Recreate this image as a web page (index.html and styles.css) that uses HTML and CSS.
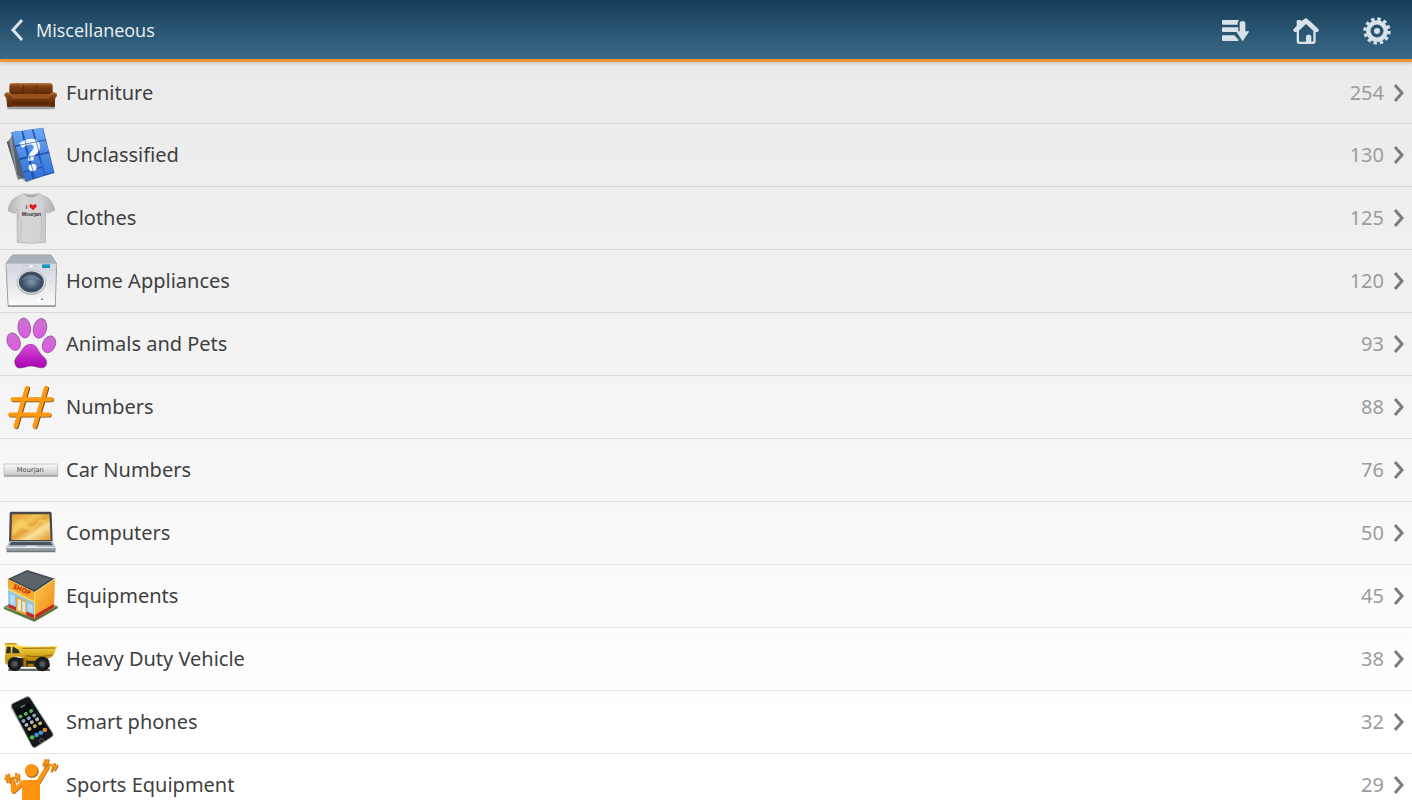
FILE: index.html
```html
<!DOCTYPE html>
<html lang="en">
<head>
    <meta charset="UTF-8">
    <meta name="viewport" content="width=device-width, initial-scale=1.0">
    <title>Miscellaneous</title>
    <link rel="stylesheet" href="styles.css">
</head>
<body>
    <svg class="defs" aria-hidden="true">
        <defs>
            <linearGradient id="leather" x1="0" y1="0" x2="0" y2="1">
                <stop offset="0" stop-color="#a5612b"/>
                <stop offset=".35" stop-color="#7d3e12"/>
                <stop offset="1" stop-color="#5c2805"/>
            </linearGradient>
            <linearGradient id="tile" x1="0" y1="0" x2="0" y2="1">
                <stop offset="0" stop-color="#6ba7f2"/>
                <stop offset="1" stop-color="#2f6fd6"/>
            </linearGradient>
            <linearGradient id="shirt" x1="0" y1="0" x2="1" y2="0">
                <stop offset="0" stop-color="#b5b5b5"/>
                <stop offset=".3" stop-color="#d6d6d6"/>
                <stop offset=".7" stop-color="#d2d2d2"/>
                <stop offset="1" stop-color="#b0b0b0"/>
            </linearGradient>
            <linearGradient id="metal" x1="0" y1="0" x2="0" y2="1">
                <stop offset="0" stop-color="#a9b0b6"/>
                <stop offset=".3" stop-color="#d6dae0"/>
                <stop offset="1" stop-color="#fbfbfb"/>
            </linearGradient>
            <radialGradient id="drum">
                <stop offset="0" stop-color="#8399ab"/>
                <stop offset=".6" stop-color="#4c6178"/>
                <stop offset="1" stop-color="#2a3b4f"/>
            </radialGradient>
            <linearGradient id="toe" x1="0" y1="0" x2="0" y2="1">
                <stop offset="0" stop-color="#c873cd"/>
                <stop offset="1" stop-color="#e05ae4"/>
            </linearGradient>
            <linearGradient id="pad" x1="0" y1="0" x2="0" y2="1">
                <stop offset="0" stop-color="#d64fdc"/>
                <stop offset="1" stop-color="#a900ae"/>
            </linearGradient>
            <linearGradient id="plate" x1="0" y1="0" x2="0" y2="1">
                <stop offset="0" stop-color="#fafafa"/>
                <stop offset="1" stop-color="#c8c8c8"/>
            </linearGradient>
            <linearGradient id="screen" x1="0" y1="0" x2="1" y2="1">
                <stop offset="0" stop-color="#dd9a26"/>
                <stop offset=".35" stop-color="#f3c45a"/>
                <stop offset=".5" stop-color="#e2a136"/>
                <stop offset=".68" stop-color="#fae29a"/>
                <stop offset="1" stop-color="#dd9322"/>
            </linearGradient>
            <linearGradient id="wall" x1="0" y1="0" x2="1" y2="1">
                <stop offset="0" stop-color="#ffc54d"/>
                <stop offset="1" stop-color="#ee8c18"/>
            </linearGradient>
            <linearGradient id="truck" x1="0" y1="0" x2="0" y2="1">
                <stop offset="0" stop-color="#ffdc4a"/>
                <stop offset="1" stop-color="#b98203"/>
            </linearGradient>
            <filter id="soft" x="-20%" y="-20%" width="140%" height="140%">
                <feGaussianBlur stdDeviation="2"/>
            </filter>
        </defs>
    </svg>

    <header class="top-bar">
        <a class="back" href="#">
            <svg class="back-icon" viewBox="0 0 14 24" aria-hidden="true"><path d="M12 2 3 12l9 10"/></svg>
            <span>Miscellaneous</span>
        </a>
        <nav class="tools">
            <a href="#" aria-label="Sort">
                <svg viewBox="0 0 84 84" aria-hidden="true">
                    <path d="M3 12q0-3 3-3h46l2 3-4 3v8H6q-3 0-3-3zM3 34q0-3 3-3h46v14H6q-3 0-3-3zM3 58q0-3 3-3h34l13 14-2 3H6q-3 0-3-3z"/>
                    <path d="M56 18q0-5 5-5h7q5 0 5 5v25h12L65 73 45 43h11z"/>
                </svg>
            </a>
            <a href="#" aria-label="Home">
                <svg viewBox="0 0 84 84" aria-hidden="true">
                    <path fill-rule="evenodd" d="M42 3 56 14 79 36q4 4 0 7l-2 3-6-2v29q0 8-8 8H22q-8 0-8-8V44l-6 2-4-5q-2-2 1-5l9-9V12q0-3 3-3h7q3 0 3 4zM42 21 21 41v30q0 3 3 3h18V59q0-6 6-6h4q6 0 6 6v15q6 0 6-3V41z"/>
                </svg>
            </a>
            <a href="#" aria-label="Settings">
                <svg viewBox="0 0 84 84" aria-hidden="true">
                    <circle class="gear-teeth" cx="42" cy="42" r="36"/>
                    <circle class="gear-ring" cx="42" cy="42" r="26"/>
                    <circle cx="42" cy="42" r="9"/>
                </svg>
            </a>
        </nav>
    </header>

    <main>
        <ul class="sections">
            <li><a class="section" href="#">
                <svg class="pic" viewBox="0 -3 192 186" aria-hidden="true">
                    <path d="M22 131h142v8H22z" fill="#6e6e6e" opacity=".6" filter="url(#soft)"/>
                    <path d="M28 66q1-5 7-5 17-2 34 0 20-2 40 0 20-2 41 0 7 0 8 6v28H28z" fill="url(#leather)"/>
                    <path d="M20 98h145v33H21z" fill="#602b07"/>
                    <path d="M33 94q60-3 120 0v14H33z" fill="#965222"/>
                    <path d="M33 107h120v7H33z" fill="#713308"/>
                    <path d="M13 94q4-8 14-5 8 3 9 12l-3 30H22l-3-27q-7-3-6-10zM171 94q-4-8-14-5-8 3-9 12l3 30h12l3-27q6-3 5-10z" fill="url(#leather)"/>
                    <path d="M14 93q5-6 13-3 6 2 8 8M170 93q-5-6-13-3-6 2-8 8M31 63q20-4 38 0M72 63q19-3 37 0M111 63q23-3 43 0" fill="none" stroke="#bd7b43" stroke-width="3"/>
                    <path d="M70 64v28M110 64v28M22 121h140" stroke="#57290b" stroke-width="2"/>
                </svg>
                <span class="name">Furniture</span>
                <span class="count">254</span>
                <svg class="arrow" viewBox="0 0 12 20" aria-hidden="true"><path d="m2 2 7 8-7 8"/></svg>
            </a></li>
            <li><a class="section" href="#">
                <svg class="pic" viewBox="0 -3 192 186" aria-hidden="true">
                    <path d="m20 50 25-9 30 115-20 8z" fill="#53575e"/>
                    <path d="m26 46 22-30 32 140-28 6z" fill="#868c94"/>
                    <path d="m34 24 96-16 33 134-84 30-27-22z" fill="#243851" opacity=".5" filter="url(#soft)"/>
                    <path d="m34 22 94-12 35 134-85 24z" fill="#1c53af"/>
                    <path d="m36 22 28-5 8 37-27 8zM68 17l27-5 10 36-29 6zM99 12l28-4 9 36-28 5zM47 66l26-7 9 35-25 6zM77 58l28-6 10 34-28 7zM109 51l27-6 11 34-28 7zM60 106l24-7 8 34-23 7zM88 98l27-7 9 34-27 7zM119 91l27-7 15 57-32 9zM70 144l22-7 5 25-19 5zM97 136l27-7 5 23-26 8z" fill="url(#tile)"/>
                    <text class="mark" x="63" y="137" transform="rotate(-10 95 90)">?</text>
                    <path d="m68 18 36 140M99 13l36 136M45 63l92-18M58 103l91-21" stroke="#1d4ba5" stroke-width="2"/>
                </svg>
                <span class="name">Unclassified</span>
                <span class="count">130</span>
                <svg class="arrow" viewBox="0 0 12 20" aria-hidden="true"><path d="m2 2 7 8-7 8"/></svg>
            </a></li>
            <li><a class="section" href="#">
                <svg class="pic" viewBox="0 -3 192 186" aria-hidden="true">
                    <path d="M71 17q22 6 46 0l25 12q15 8 23 38l-23 9-5-13-1 100q-43 6-84 0L51 63l-6 14-21-9q5-30 21-38z" fill="url(#shirt)" stroke="#aaa" stroke-width="2"/>
                    <path d="M71 17q22 23 46 0-22 8-46 0z" fill="#aaa"/>
                    <path d="M51 62q6 15 5 31M137 62q-6 15-5 31M66 89q-5 49-3 69M123 87q7 36-1 69" fill="none" stroke="#bebebe" stroke-width="3"/>
                    <text class="shirt-text" x="77" y="64">I</text>
                    <path d="M99 67 89 57q-3-8 4-8 4 0 6 4 2-4 6-4 7 0 4 8z" fill="#df1824"/>
                    <text class="shirt-text" x="65" y="83">Mourjan</text>
                </svg>
                <span class="name">Clothes</span>
                <span class="count">125</span>
                <svg class="arrow" viewBox="0 0 12 20" aria-hidden="true"><path d="m2 2 7 8-7 8"/></svg>
            </a></li>
            <li><a class="section" href="#">
                <svg class="pic" viewBox="0 -3 192 186" aria-hidden="true">
                    <path d="M24 159h143v8H24z" fill="#777" filter="url(#soft)"/>
                    <path d="M35 14q2-2 6-2h108q5 0 7 4l14 23-4 121q0 4-4 4H29q-5 0-5-4L18 38z" fill="url(#metal)" stroke="#98a0a5" stroke-width="3"/>
                    <path d="m36 15-17 23h150l-15-23z" fill="#aab2b7"/>
                    <path d="M19 38h150v15H20z" fill="#d6dae1"/>
                    <path d="M126 40h24v11h-24z" fill="#1695bd"/>
                    <circle cx="93" cy="46" r="7" fill="#f8f8f8" stroke="#9da5ad"/>
                    <path d="M68 45h16M103 45h13" stroke="#c3c7cd" stroke-width="3"/>
                    <ellipse cx="94" cy="94" rx="44" ry="38" fill="#a9b0b9"/>
                    <ellipse cx="94" cy="93" rx="42" ry="35" fill="#d9dde2"/>
                    <ellipse cx="94" cy="93" rx="35" ry="29" fill="url(#drum)" stroke="#47535f" stroke-width="5"/>
                    <path d="M63 91q20-16 62-1-22-29-50-13-10 6-12 14z" fill="#9fafbd" opacity=".35"/>
                    <path d="M109 140h33v16h-33z" fill="#fff" stroke="#d8dadd"/>
                    <path d="M123 143h7v4h-7z" fill="#4e82b2"/>
                </svg>
                <span class="name">Home Appliances</span>
                <span class="count">120</span>
                <svg class="arrow" viewBox="0 0 12 20" aria-hidden="true"><path d="m2 2 7 8-7 8"/></svg>
            </a></li>
            <li><a class="section" href="#">
                <svg class="pic" viewBox="0 -3 192 186" aria-hidden="true">
                    <g fill="url(#toe)" stroke="#8b4790" stroke-width="2">
                        <ellipse cx="73" cy="42" rx="19" ry="30" transform="rotate(-7 73 42)"/>
                        <ellipse cx="120" cy="43" rx="20" ry="30" transform="rotate(13 120 43)"/>
                        <ellipse cx="41" cy="83" rx="19" ry="27" transform="rotate(-22 41 83)"/>
                        <ellipse cx="147" cy="91" rx="19" ry="26" transform="rotate(23 147 91)"/>
                    </g>
                    <path d="M92 91c-18 0-24 15-32 26-10 11-18 18-15 32 3 16 16 14 31 10 14-4 21-4 34 0 17 5 30 3 30-14-1-13-12-17-20-28-8-10-11-26-28-26z" fill="url(#pad)" stroke="#804087" stroke-width="2"/>
                </svg>
                <span class="name">Animals and Pets</span>
                <span class="count">93</span>
                <svg class="arrow" viewBox="0 0 12 20" aria-hidden="true"><path d="m2 2 7 8-7 8"/></svg>
            </a></li>
            <li><a class="section" href="#">
                <svg class="pic" viewBox="0 186 192 186" aria-hidden="true">
                    <g fill="none" stroke-linecap="round">
                        <path d="M84 224 50 339M141 224l-34 115M40 258h116M33 304h116" stroke="#765018" stroke-width="13"/>
                        <path d="M81 222 47 337M138 222l-34 115M38 256h116M31 302h116" stroke="#ff9710" stroke-width="13"/>
                    </g>
                </svg>
                <span class="name">Numbers</span>
                <span class="count">88</span>
                <svg class="arrow" viewBox="0 0 12 20" aria-hidden="true"><path d="m2 2 7 8-7 8"/></svg>
            </a></li>
            <li><a class="section" href="#">
                <svg class="pic" viewBox="0 -3 192 186" aria-hidden="true">
                    <path d="M12 102h162v8H12z" fill="#999"/>
                    <path d="M12 72h161v34H12z" fill="url(#plate)" stroke="#b5b5b5" stroke-width="2"/>
                    <text class="plate-text" x="91" y="97">Mourjan</text>
                </svg>
                <span class="name">Car Numbers</span>
                <span class="count">76</span>
                <svg class="arrow" viewBox="0 0 12 20" aria-hidden="true"><path d="m2 2 7 8-7 8"/></svg>
            </a></li>
            <li><a class="section" href="#">
                <svg class="pic" viewBox="0 187 192 186" aria-hidden="true">
                    <path d="M20 329h146v9H20z" fill="#777" filter="url(#soft)"/>
                    <path d="M29 221q0-5 5-5h116q5 0 5 5l3 88H27z" fill="#47474c"/>
                    <path d="M36 224h112l4 77H34z" fill="url(#screen)"/>
                    <path d="M43 252q17-25 34-1t41-11q15-7 20 9-21-4-33 14t-31 5-31 14z" fill="#fbd66f" opacity=".55" filter="url(#soft)"/>
                    <path d="M29 304h129l9 20H18z" fill="#b7bec5"/>
                    <path d="M34 306h118l6 11H28z" fill="#49545f"/>
                    <path d="M79 318h30l3 5H76z" fill="#e5e9ed"/>
                    <path d="M18 323h149q2 8-6 10H25q-9-1-7-10z" fill="#929ba2"/>
                    <path d="M19 324h147" stroke="#eef1f4" stroke-width="3"/>
                </svg>
                <span class="name">Computers</span>
                <span class="count">50</span>
                <svg class="arrow" viewBox="0 0 12 20" aria-hidden="true"><path d="m2 2 7 8-7 8"/></svg>
            </a></li>
            <li><a class="section" href="#">
                <svg class="pic" viewBox="0 -3 192 186" aria-hidden="true">
                    <path d="m11 122 75-34 87 33-70 44z" fill="#7b9852"/>
                    <path d="m11 123 92 36v8l-91-38zM103 159l70-39v7l-70 40z" fill="#56713a"/>
                    <path d="m24 45 80 40v74l-79-35z" fill="#8fc5e8"/>
                    <path d="m104 79 61-41-3 85-58 33z" fill="url(#wall)"/>
                    <path d="m23 39 58-27 84 26-61 41z" fill="#454b52"/>
                    <path d="m33 38 48-20 71 21-49 32z" fill="#5d656c"/>
                    <path d="m23 39 81 39v28L25 67z" fill="#f4a92c"/>
                    <text class="shop-text" x="38" y="66" transform="rotate(24 38 66)">SHOP</text>
                    <path d="m25 67 79 38v6L25 73z" fill="#ffd55a"/>
                    <path d="m25 114 79 33v12l-79-35zM104 147l57-33v10l-57 35z" fill="#c82620"/>
                    <path d="m48 92 31 14v42l-31-13z" fill="#f2a529"/>
                    <path d="m53 99 10 4v33l-10-4zM67 105l9 4v31l-9-4z" fill="#d5edf5"/>
                    <path d="m31 83 13 6v29l-13-6zM83 111l15 7v22l-15-6z" fill="#bedcf1"/>
                    <path d="m104 79 61-41M104 80v77" stroke="#ffe267" stroke-width="3"/>
                </svg>
                <span class="name">Equipments</span>
                <span class="count">45</span>
                <svg class="arrow" viewBox="0 0 12 20" aria-hidden="true"><path d="m2 2 7 8-7 8"/></svg>
            </a></li>
            <li><a class="section" href="#">
                <svg class="pic" viewBox="0 -3 192 186" aria-hidden="true">
                    <path d="M25 119h125v7H25z" fill="#666" filter="url(#soft)"/>
                    <path d="M21 86h122l7 27H24z" fill="#2b2717"/>
                    <path d="M15 48h40l13 24 32 8 7 15H83q-11-15-40-12-12 3-19 16h-8z" fill="url(#truck)"/>
                    <path d="M21 53h11v20H18zM38 53h14l7 20H37z" fill="#26302c"/>
                    <path d="M14 47h39l-5-5H16zM16 77h5v29h-5z" fill="#d59b0c"/>
                    <path d="M44 48q30 6 64 5l64-1-13 29q-26 17-51 14L80 88 67 69 42 55z" fill="url(#truck)"/>
                    <path d="m67 58 98-1M77 80q36 7 79-2" fill="none" stroke="#8f6a0a" stroke-width="3"/>
                    <g fill="#171b1c">
                        <circle cx="44" cy="105" r="21"/>
                        <circle cx="127" cy="105" r="22"/>
                    </g>
                    <g fill="#555a56" stroke="#363d3d" stroke-width="4">
                        <circle cx="44" cy="105" r="9"/>
                        <circle cx="127" cy="105" r="9"/>
                    </g>
                    <path d="M70 86h9v27h-9zM83 104h18v10H84z" fill="#a77508"/>
                </svg>
                <span class="name">Heavy Duty Vehicle</span>
                <span class="count">38</span>
                <svg class="arrow" viewBox="0 0 12 20" aria-hidden="true"><path d="m2 2 7 8-7 8"/></svg>
            </a></li>
            <li><a class="section" href="#">
                <svg class="pic" viewBox="0 0 192 186" aria-hidden="true">
                    <path d="m30 49 70 122 27-13-70-110z" fill="#888" opacity=".5" filter="url(#soft)"/>
                    <path d="M35 49q-4-8 4-12l39-19q8-4 14 5l66 103q4 8-4 13l-47 30q-7 4-12-5z" fill="#15181a" stroke="#a5a8aa" stroke-width="3"/>
                    <path d="m44 61 41-25 54 76-46 29z" fill="#080c0e"/>
                    <path d="m62 49 14-7" stroke="#81868a" stroke-width="4"/>
                    <g stroke-width="11" stroke-linecap="round" stroke-dasharray="1 17">
                        <path d="m61 77 42-22" stroke="#5bb35e"/>
                        <path d="m70 90 43-22" stroke="#86a9c1"/>
                        <path d="m79 102 42-22" stroke="#b8bcc0"/>
                        <path d="m88 114 42-22" stroke="#c9b568"/>
                    </g>
                    <path d="m96 139 1 0" stroke="#48bd4d" stroke-width="13" stroke-linecap="round"/>
                    <path d="m109 132 1 0M122 125l1 0" stroke="#4a93d6" stroke-width="13" stroke-linecap="round"/>
                    <path d="m134 117 1 0" stroke="#e88732" stroke-width="13" stroke-linecap="round"/>
                    <circle cx="125" cy="149" r="6" fill="#101214" stroke="#888" stroke-width="2"/>
                </svg>
                <span class="name">Smart phones</span>
                <span class="count">32</span>
                <svg class="arrow" viewBox="0 0 12 20" aria-hidden="true"><path d="m2 2 7 8-7 8"/></svg>
            </a></li>
            <li><a class="section" href="#">
                <svg class="pic" viewBox="0 12 192 186" aria-hidden="true">
                    <circle cx="96" cy="64" r="20" fill="#a26a20"/>
                    <path d="m39 93 3 32 29-27h45l29-49" fill="none" stroke="#a26a20" stroke-width="14" stroke-linejoin="round"/>
                    <circle cx="94" cy="61" r="19" fill="#ff9410"/>
                    <path d="m37 91 3 32 29-26h45l29-48" fill="none" stroke="#ff9410" stroke-width="13" stroke-linejoin="round" stroke-linecap="round"/>
                    <path d="M66 93q2-3 7-3h40q5 0 7 4v91H97v-18h-9v18H66z" fill="#ff9410"/>
                    <g fill="none" stroke="#a26a20" stroke-width="6" stroke-linecap="round">
                        <path d="m17 87 38-3M20 77l3 20M27 74l3 24M49 72l3 24M57 75l2 17"/>
                        <path d="m136 38 31 14M138 31l-7 16M146 31l-10 22M165 43l-9 22M172 48l-6 13"/>
                    </g>
                    <g fill="none" stroke="#ff9410" stroke-width="5" stroke-linecap="round">
                        <path d="m15 85 38-3M18 75l3 20M25 72l3 24M47 70l3 24M55 73l2 17"/>
                        <path d="m134 36 31 14M136 29l-7 16M144 29l-10 22M163 41l-9 22M170 46l-6 13"/>
                    </g>
                </svg>
                <span class="name">Sports Equipment</span>
                <span class="count">29</span>
                <svg class="arrow" viewBox="0 0 12 20" aria-hidden="true"><path d="m2 2 7 8-7 8"/></svg>
            </a></li>
        </ul>
    </main>
</body>
</html>
```
FILE: styles.css
```css
* {
    box-sizing: border-box;
}
body {
    margin: 0;
    font-family: "Noto Sans", "Open Sans", sans-serif;
    color: #3f3f3f;
    background: linear-gradient(#e9e9e9, #f3f3f3 45%, #fff 90%) fixed;
}
a {
    color: inherit;
    text-decoration: none;
}
.defs {
    position: absolute;
    width: 0;
    height: 0;
}
.top-bar {
    display: flex;
    justify-content: space-between;
    align-items: center;
    height: 62px;
    padding: 0 21px 0 10px;
    background: linear-gradient(#173e5a, #3b6a87);
    border-bottom: 3px solid #ed9730;
    box-shadow: 0 1px 4px rgba(0, 0, 0, 0.2);
}
.back {
    display: flex;
    align-items: center;
    gap: 12px;
    padding-top: 1px;
    font-family: "Open Sans", "Noto Sans", sans-serif;
    font-size: 18px;
    color: #eaf0f4;
}
.back-icon {
    width: 14px;
    height: 24px;
    fill: none;
    stroke: #d8e4ee;
    stroke-width: 3;
}
.tools {
    display: flex;
    gap: 43px;
    padding-top: 2px;
}
.tools svg {
    display: block;
    width: 28px;
    height: 28px;
    fill: #d7e2ea;
}
.tools .gear-teeth {
    fill: none;
    stroke: #d7e2ea;
    stroke-width: 10;
    stroke-dasharray: 10 8.85;
}
.tools .gear-ring {
    fill: none;
    stroke: #d7e2ea;
    stroke-width: 13;
}
.sections {
    margin: 0;
    padding: 0;
    list-style: none;
}
.section {
    display: flex;
    align-items: center;
    min-height: 63px;
    padding-right: 7px;
    font-size: 20px;
    line-height: 28px;
    border-bottom: 1px solid rgba(0, 0, 0, 0.1);
}
.sections li:first-child .section {
    min-height: 62px;
}
.section:hover {
    background: rgba(255, 255, 255, 0.5);
}
.pic {
    flex: none;
    width: 64px;
    height: 62px;
    margin: -1px 2px -1px 0;
    overflow: visible;
}
.name {
    flex: 1;
}
.count {
    margin-right: 9px;
    color: #9c9c9c;
}
.arrow {
    width: 12px;
    height: 20px;
    fill: none;
    stroke: #7c7c7c;
    stroke-width: 3;
}
.mark {
    font-size: 132px;
    font-weight: 700;
    fill: #f4f8ff;
}
.shirt-text {
    font-family: "Liberation Sans", sans-serif;
    font-size: 15px;
    font-weight: 700;
    fill: #383038;
}
.plate-text {
    font-family: "DejaVu Sans", sans-serif;
    font-size: 20px;
    text-anchor: middle;
    fill: #454545;
}
.shop-text {
    font-size: 20px;
    font-weight: 700;
    fill: #c9200f;
}
```
